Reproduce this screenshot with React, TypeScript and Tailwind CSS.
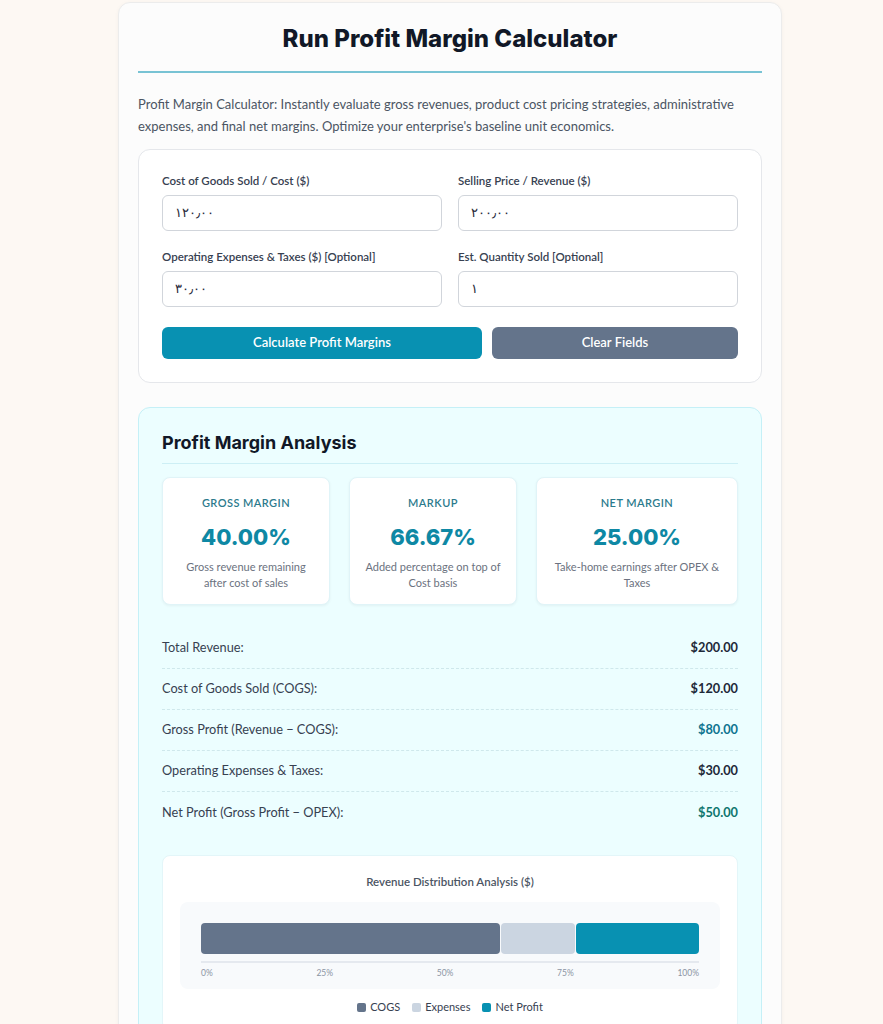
import React from "react";

const body = { fontFamily: "Lato, 'Noto Sans', sans-serif" };
const head = { fontFamily: "Inter, 'Noto Sans', sans-serif" };

interface Stat {
  label: string;
  value: string;
  note: string;
}

const stats: Stat[] = [
  { label: "Gross Margin", value: "40.00%", note: "Gross revenue remaining after cost of sales" },
  { label: "Markup", value: "66.67%", note: "Added percentage on top of Cost basis" },
  { label: "Net Margin", value: "25.00%", note: "Take-home earnings after OPEX & Taxes" },
];

const rows = [
  { label: "Total Revenue:", value: "$200.00", color: "text-gray-800" },
  { label: "Cost of Goods Sold (COGS):", value: "$120.00", color: "text-gray-800" },
  { label: "Gross Profit (Revenue − COGS):", value: "$80.00", color: "text-[#0e7490]" },
  { label: "Operating Expenses & Taxes:", value: "$30.00", color: "text-gray-800" },
  { label: "Net Profit (Gross Profit − OPEX):", value: "$50.00", color: "text-[#0f766e]" },
];

function Field({ label, value }: { label: string; value: string }) {
  return (
    <div className="flex flex-col gap-[6px]">
      <label className="text-[11.5px] font-semibold text-[#374151] leading-[16px]">{label}</label>
      <div className="h-[36px] rounded-[6px] border border-[#d1d5db] bg-white px-[12px] flex items-center text-[13px] text-[#1f2937]">
        {value}
      </div>
    </div>
  );
}

export default function App() {
  return (
    <div className="min-h-screen bg-[#fdf8f3] pt-[2px]" style={body}>
      <div className="ml-[118px] w-[664px] rounded-[12px] border border-[#ececec] bg-[#fcfcfc] px-[19px] pt-[20px] pb-[40px] shadow-[0_1px_4px_rgba(0,0,0,0.04)]">
        <h1 className="text-center text-[24px] font-extrabold text-[#111827] leading-[32px]" style={head}>
          Run Profit Margin Calculator
        </h1>
        <div className="mt-[16px] h-[2px] bg-[#78c3d4]" />
        <p className="mt-[20px] text-[13px] leading-[22px] text-[#4b5563]">
          Profit Margin Calculator: Instantly evaluate gross revenues, product cost pricing strategies, administrative
          expenses, and final net margins. Optimize your enterprise's baseline unit economics.
        </p>

        <div className="mt-[12px] rounded-[12px] border border-[#e5e7eb] bg-white px-[23px] pt-[23px] pb-[23px]">
          <div className="grid grid-cols-2 gap-x-[16px] gap-y-[18px]">
            <Field label="Cost of Goods Sold / Cost ($)" value="١٢٠٫٠٠" />
            <Field label="Selling Price / Revenue ($)" value="٢٠٠٫٠٠" />
            <Field label="Operating Expenses & Taxes ($) [Optional]" value="٣٠٫٠٠" />
            <Field label="Est. Quantity Sold [Optional]" value="١" />
          </div>
          <div className="mt-[20px] flex gap-[10px]">
            <button className="flex-[1.3] h-[32px] rounded-[6px] bg-[#0891b2] text-[13px] font-semibold text-white">
              Calculate Profit Margins
            </button>
            <button className="flex-1 h-[32px] rounded-[6px] bg-[#64748b] text-[13px] font-semibold text-white">
              Clear Fields
            </button>
          </div>
        </div>

        <div className="mt-[24px] rounded-[12px] border border-[#c5f0f7] bg-[#ecfeff] px-[23px] pt-[22px] pb-[24px]">
          <h2 className="text-[18px] font-bold text-[#111827] leading-[26px] pb-[7px] border-b border-[#cdeff5]" style={head}>
            Profit Margin Analysis
          </h2>
          <div className="mt-[13px] grid grid-cols-[168px_168px_1fr] gap-[19px]">
            {stats.map((s) => (
              <div
                key={s.label}
                className="rounded-[8px] bg-white border border-[#e0f4f8] shadow-[0_1px_3px_rgba(0,0,0,0.05)] px-[14px] pt-[17px] pb-[14px] text-center h-[128px]"
              >
                <div className="text-[11px] font-semibold uppercase tracking-[0.04em] text-[#2b7a8c] leading-[16px]">
                  {s.label}
                </div>
                <div className="mt-[12px] text-[22px] font-extrabold text-[#0e88a4] leading-[28px]" style={head}>
                  {s.value}
                </div>
                <div className="mt-[8px] text-[11px] leading-[16px] text-[#6b7280]">{s.note}</div>
              </div>
            ))}
          </div>

          <div className="mt-[23px]">
            {rows.map((r, i) => (
              <div
                key={r.label}
                className={
                  "flex items-center justify-between h-[41px] text-[12.75px] " +
                  (i < rows.length - 1 ? "border-b border-dashed border-[#cfe8ec]" : "")
                }
              >
                <span className="text-[#374151]">{r.label}</span>
                <span className={"font-bold " + r.color}>{r.value}</span>
              </div>
            ))}
          </div>

          <div className="mt-[22px] rounded-[8px] bg-white border border-[#e3f6f9] px-[17px] pt-[18px] pb-[14px]">
            <div className="text-center text-[11.5px] font-semibold text-[#4b5563] leading-[16px]">
              Revenue Distribution Analysis ($)
            </div>
            <div className="mt-[12px] rounded-[8px] bg-[#f8fafc] px-[21px] pt-[21px] pb-[10px]">
              <div className="flex h-[31px] gap-[1px]">
                <div className="w-[60%] rounded-[4px] bg-[#64748b]" />
                <div className="w-[15%] rounded-[4px] bg-[#cbd5e1]" />
                <div className="flex-1 rounded-[4px] bg-[#0891b2]" />
              </div>
              <div className="mt-[7px] h-[2px] bg-[#e5e9ef]" />
              <div className="mt-[4px] flex justify-between text-[8.5px] text-[#8b94a3] leading-[12px]">
                <span>0%</span>
                <span>25%</span>
                <span>50%</span>
                <span>75%</span>
                <span>100%</span>
              </div>
            </div>
            <div className="mt-[10px] flex items-center justify-center gap-[12px] text-[11px] text-[#374151]">
              <span className="flex items-center gap-[4px]">
                <span className="h-[9px] w-[9px] rounded-[2px] bg-[#64748b]" />
                COGS
              </span>
              <span className="flex items-center gap-[4px]">
                <span className="h-[9px] w-[9px] rounded-[2px] bg-[#cbd5e1]" />
                Expenses
              </span>
              <span className="flex items-center gap-[4px]">
                <span className="h-[9px] w-[9px] rounded-[2px] bg-[#0891b2]" />
                Net Profit
              </span>
            </div>
          </div>
        </div>
      </div>
    </div>
  );
}
